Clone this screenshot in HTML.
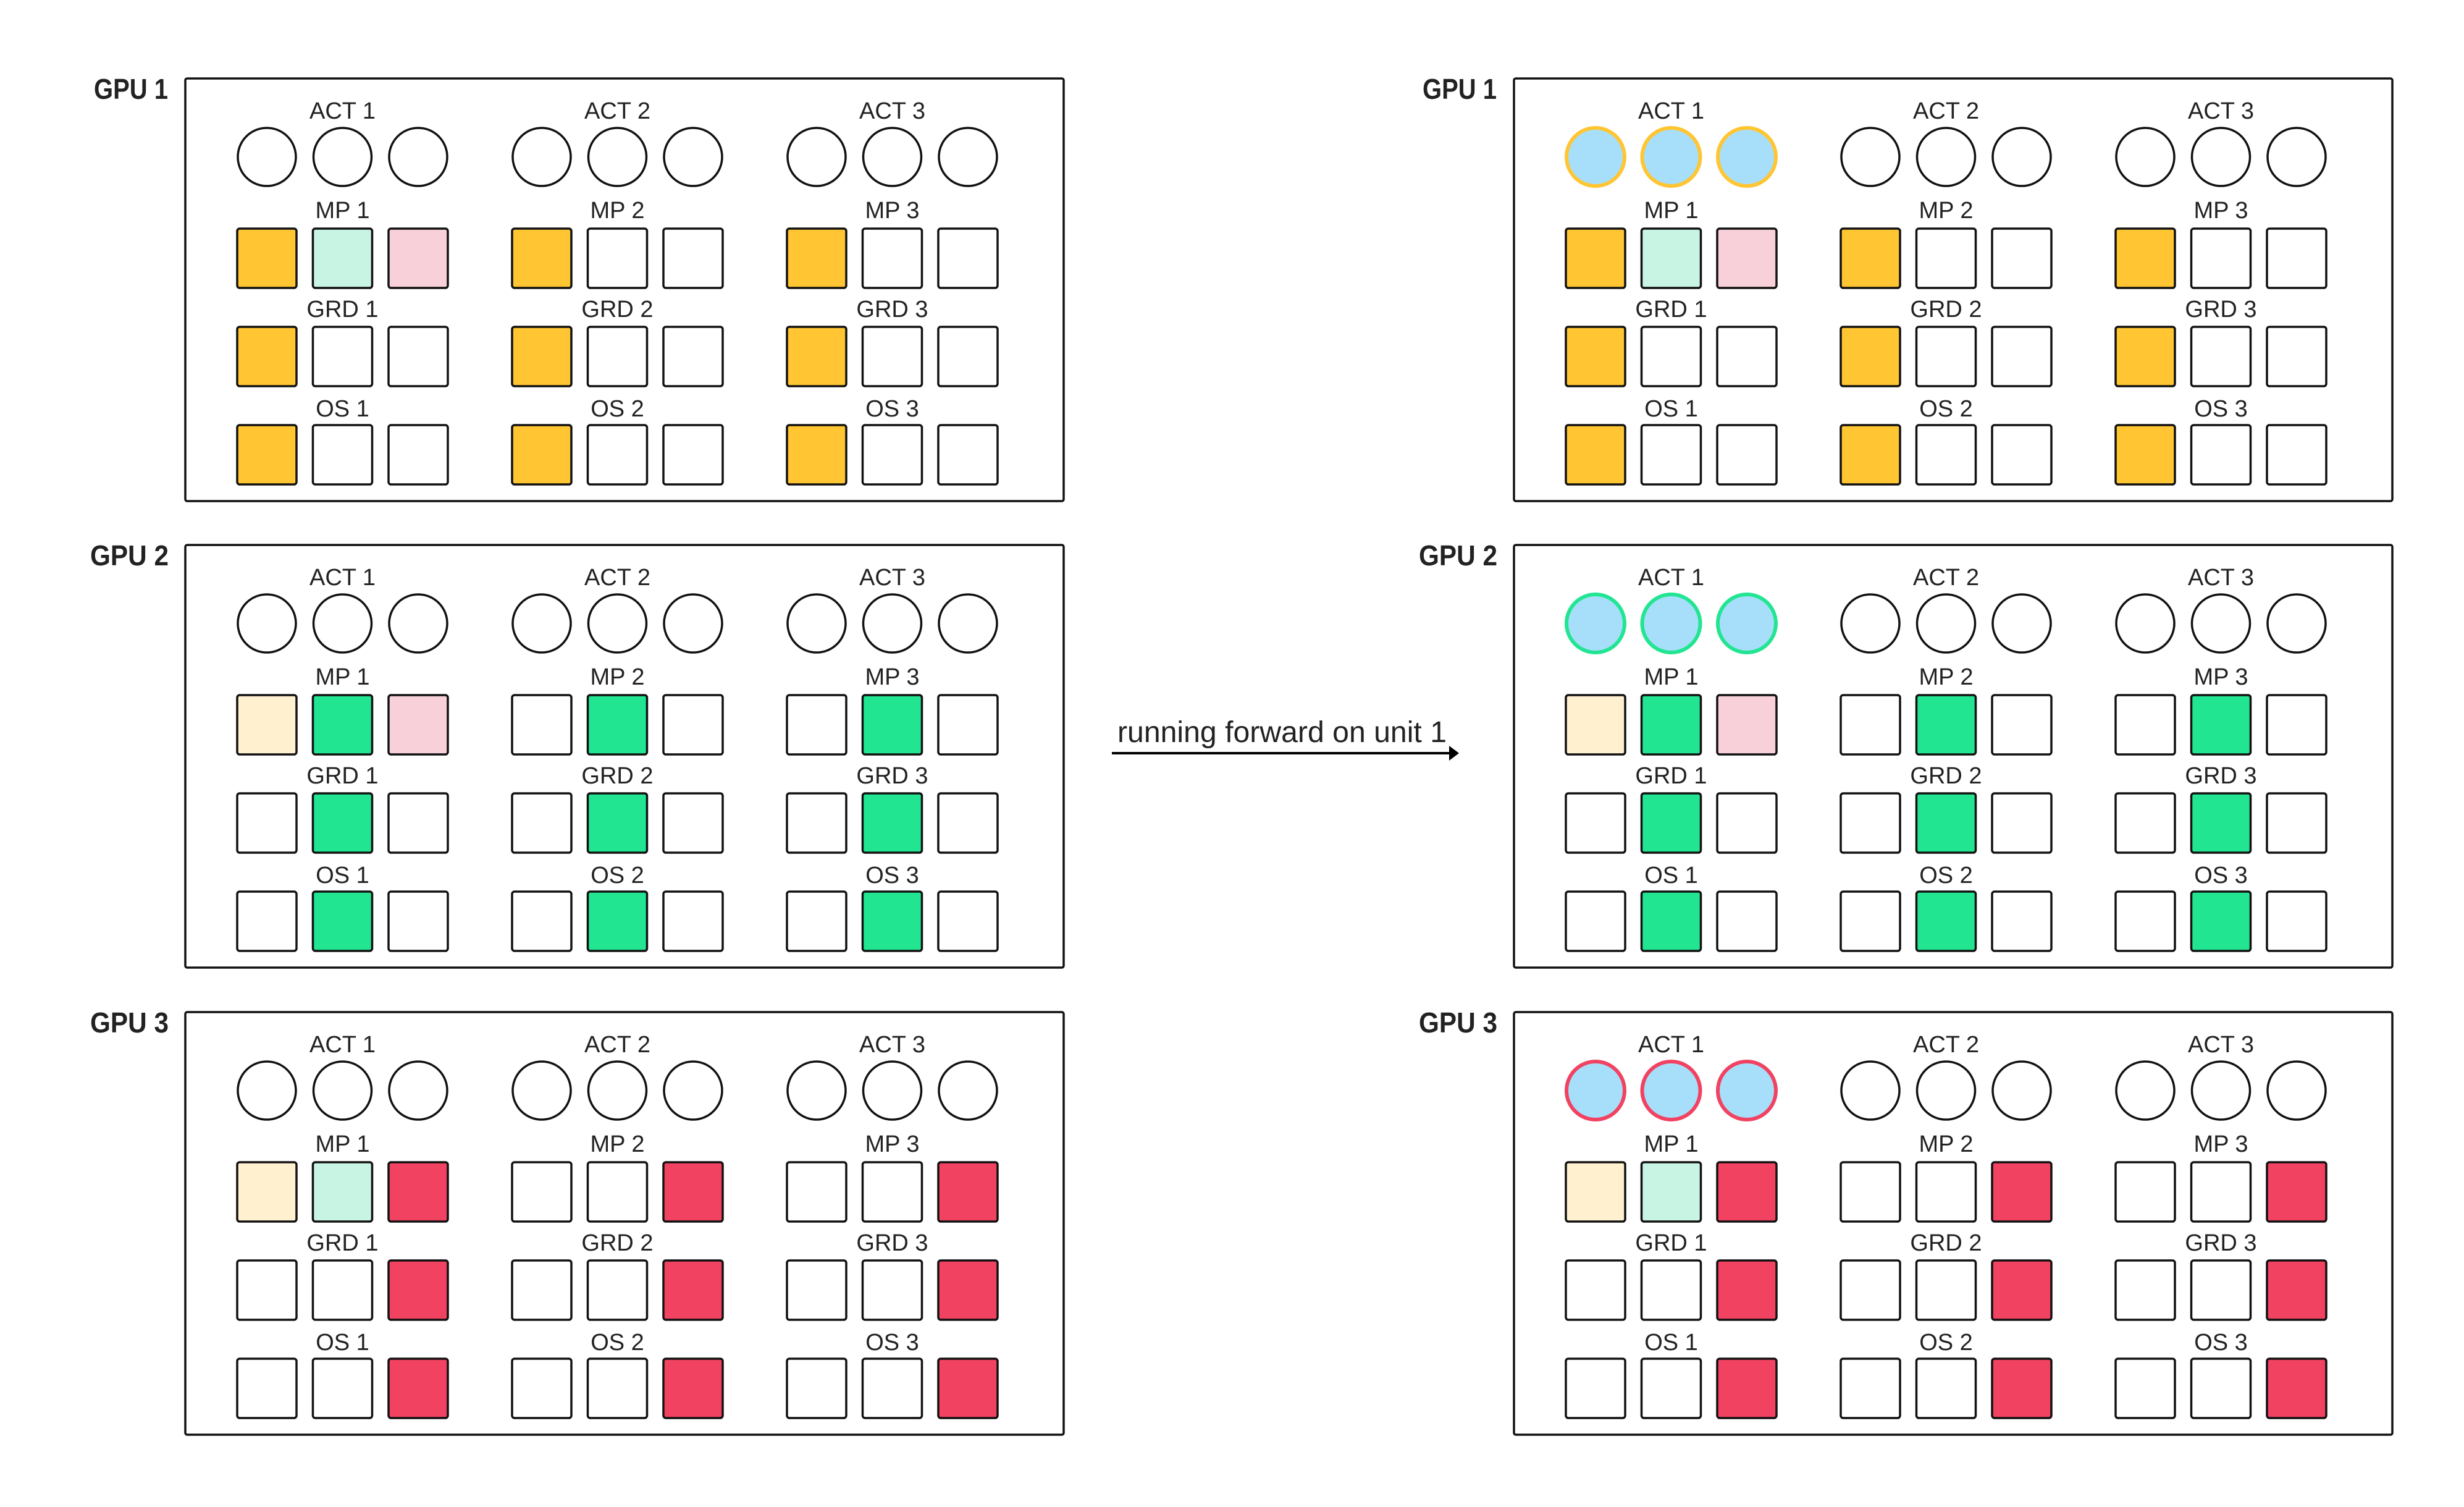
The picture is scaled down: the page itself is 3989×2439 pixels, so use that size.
<!DOCTYPE html>
<html><head><meta charset="utf-8"><style>
html,body{margin:0;padding:0;background:#fff;}
svg{display:block;}
.l{font-family:"Liberation Sans",sans-serif;font-size:38px;fill:#222;text-anchor:middle;}
.g{font-family:"Liberation Sans",sans-serif;font-size:46px;font-weight:bold;fill:#222;}
.k{stroke:#111;stroke-width:3.5;}
</style></head><body>
<svg width="3989" height="2439" viewBox="0 0 3989 2439" xmlns="http://www.w3.org/2000/svg">
<defs>
<g id="box">
<rect x="0" y="0" width="1422" height="684" rx="3" fill="#fff" stroke="#111" stroke-width="3.5"/>
<!-- circles group0 -->
<circle cx="132" cy="127" r="47" style="fill:var(--af);stroke:var(--as);stroke-width:var(--aw)"/>
<circle cx="254.5" cy="127" r="47" style="fill:var(--af);stroke:var(--as);stroke-width:var(--aw)"/>
<circle cx="377" cy="127" r="47" style="fill:var(--af);stroke:var(--as);stroke-width:var(--aw)"/>
<g fill="#fff" class="k">
<circle cx="577" cy="127" r="47"/><circle cx="699.5" cy="127" r="47"/><circle cx="822" cy="127" r="47"/>
<circle cx="1022" cy="127" r="47"/><circle cx="1144.5" cy="127" r="47"/><circle cx="1267" cy="127" r="47"/>
</g>
<g class="k">
<!-- MP row -->
<rect x="84" y="243" width="96" height="96" rx="4" style="fill:var(--p0)"/>
<rect x="206.5" y="243" width="96" height="96" rx="4" style="fill:var(--p1)"/>
<rect x="329" y="243" width="96" height="96" rx="4" style="fill:var(--p2)"/>
<rect x="529" y="243" width="96" height="96" rx="4" style="fill:var(--c0)"/>
<rect x="651.5" y="243" width="96" height="96" rx="4" style="fill:var(--c1)"/>
<rect x="774" y="243" width="96" height="96" rx="4" style="fill:var(--c2)"/>
<rect x="974" y="243" width="96" height="96" rx="4" style="fill:var(--c0)"/>
<rect x="1096.5" y="243" width="96" height="96" rx="4" style="fill:var(--c1)"/>
<rect x="1219" y="243" width="96" height="96" rx="4" style="fill:var(--c2)"/>
<!-- GRD row -->
<rect x="84" y="402" width="96" height="96" rx="4" style="fill:var(--c0)"/>
<rect x="206.5" y="402" width="96" height="96" rx="4" style="fill:var(--c1)"/>
<rect x="329" y="402" width="96" height="96" rx="4" style="fill:var(--c2)"/>
<rect x="529" y="402" width="96" height="96" rx="4" style="fill:var(--c0)"/>
<rect x="651.5" y="402" width="96" height="96" rx="4" style="fill:var(--c1)"/>
<rect x="774" y="402" width="96" height="96" rx="4" style="fill:var(--c2)"/>
<rect x="974" y="402" width="96" height="96" rx="4" style="fill:var(--c0)"/>
<rect x="1096.5" y="402" width="96" height="96" rx="4" style="fill:var(--c1)"/>
<rect x="1219" y="402" width="96" height="96" rx="4" style="fill:var(--c2)"/>
<!-- OS row -->
<rect x="84" y="561" width="96" height="96" rx="4" style="fill:var(--c0)"/>
<rect x="206.5" y="561" width="96" height="96" rx="4" style="fill:var(--c1)"/>
<rect x="329" y="561" width="96" height="96" rx="4" style="fill:var(--c2)"/>
<rect x="529" y="561" width="96" height="96" rx="4" style="fill:var(--c0)"/>
<rect x="651.5" y="561" width="96" height="96" rx="4" style="fill:var(--c1)"/>
<rect x="774" y="561" width="96" height="96" rx="4" style="fill:var(--c2)"/>
<rect x="974" y="561" width="96" height="96" rx="4" style="fill:var(--c0)"/>
<rect x="1096.5" y="561" width="96" height="96" rx="4" style="fill:var(--c1)"/>
<rect x="1219" y="561" width="96" height="96" rx="4" style="fill:var(--c2)"/>
</g>
</g>
</defs>

<!-- Left column -->
<use href="#box" x="300" y="127" style="--af:#fff;--as:#111;--aw:3.5;--c0:#FFC532;--c1:#fff;--c2:#fff;--p0:#FFC532;--p1:#C8F5E3;--p2:#F8D0D9"/>
<use href="#box" x="300" y="882" style="--af:#fff;--as:#111;--aw:3.5;--c0:#fff;--c1:#22E592;--c2:#fff;--p0:#FFF0CF;--p1:#22E592;--p2:#F8D0D9"/>
<use href="#box" x="300" y="1638" style="--af:#fff;--as:#111;--aw:3.5;--c0:#fff;--c1:#fff;--c2:#F24262;--p0:#FFF0CF;--p1:#C8F5E3;--p2:#F24262"/>
<!-- Right column -->
<use href="#box" x="2451" y="127" style="--af:#A7DFFB;--as:#FFC532;--aw:6;--c0:#FFC532;--c1:#fff;--c2:#fff;--p0:#FFC532;--p1:#C8F5E3;--p2:#F8D0D9"/>
<use href="#box" x="2451" y="882" style="--af:#A7DFFB;--as:#22E592;--aw:6;--c0:#fff;--c1:#22E592;--c2:#fff;--p0:#FFF0CF;--p1:#22E592;--p2:#F8D0D9"/>
<use href="#box" x="2451" y="1638" style="--af:#A7DFFB;--as:#F24262;--aw:6;--c0:#fff;--c1:#fff;--c2:#F24262;--p0:#FFF0CF;--p1:#C8F5E3;--p2:#F24262"/>

<!-- GPU labels -->
<text class="g" x="152" y="160" textLength="120" lengthAdjust="spacingAndGlyphs">GPU 1</text>
<text class="g" x="146" y="915" textLength="127" lengthAdjust="spacingAndGlyphs">GPU 2</text>
<text class="g" x="146" y="1671" textLength="127" lengthAdjust="spacingAndGlyphs">GPU 3</text>
<text class="g" x="2303" y="160" textLength="120" lengthAdjust="spacingAndGlyphs">GPU 1</text>
<text class="g" x="2297" y="915" textLength="127" lengthAdjust="spacingAndGlyphs">GPU 2</text>
<text class="g" x="2297" y="1671" textLength="127" lengthAdjust="spacingAndGlyphs">GPU 3</text>

<!-- Box labels: left -->
<g transform="translate(300,127)">
<text class="l" x="254.5" y="65">ACT 1</text><text class="l" x="699.5" y="65">ACT 2</text><text class="l" x="1144.5" y="65">ACT 3</text>
<text class="l" x="254.5" y="226">MP 1</text><text class="l" x="699.5" y="226">MP 2</text><text class="l" x="1144.5" y="226">MP 3</text>
<text class="l" x="254.5" y="386">GRD 1</text><text class="l" x="699.5" y="386">GRD 2</text><text class="l" x="1144.5" y="386">GRD 3</text>
<text class="l" x="254.5" y="547">OS 1</text><text class="l" x="699.5" y="547">OS 2</text><text class="l" x="1144.5" y="547">OS 3</text>
</g>
<g transform="translate(300,882)">
<text class="l" x="254.5" y="65">ACT 1</text><text class="l" x="699.5" y="65">ACT 2</text><text class="l" x="1144.5" y="65">ACT 3</text>
<text class="l" x="254.5" y="226">MP 1</text><text class="l" x="699.5" y="226">MP 2</text><text class="l" x="1144.5" y="226">MP 3</text>
<text class="l" x="254.5" y="386">GRD 1</text><text class="l" x="699.5" y="386">GRD 2</text><text class="l" x="1144.5" y="386">GRD 3</text>
<text class="l" x="254.5" y="547">OS 1</text><text class="l" x="699.5" y="547">OS 2</text><text class="l" x="1144.5" y="547">OS 3</text>
</g>
<g transform="translate(300,1638)">
<text class="l" x="254.5" y="65">ACT 1</text><text class="l" x="699.5" y="65">ACT 2</text><text class="l" x="1144.5" y="65">ACT 3</text>
<text class="l" x="254.5" y="226">MP 1</text><text class="l" x="699.5" y="226">MP 2</text><text class="l" x="1144.5" y="226">MP 3</text>
<text class="l" x="254.5" y="386">GRD 1</text><text class="l" x="699.5" y="386">GRD 2</text><text class="l" x="1144.5" y="386">GRD 3</text>
<text class="l" x="254.5" y="547">OS 1</text><text class="l" x="699.5" y="547">OS 2</text><text class="l" x="1144.5" y="547">OS 3</text>
</g>
<!-- Box labels: right -->
<g transform="translate(2451,127)">
<text class="l" x="254.5" y="65">ACT 1</text><text class="l" x="699.5" y="65">ACT 2</text><text class="l" x="1144.5" y="65">ACT 3</text>
<text class="l" x="254.5" y="226">MP 1</text><text class="l" x="699.5" y="226">MP 2</text><text class="l" x="1144.5" y="226">MP 3</text>
<text class="l" x="254.5" y="386">GRD 1</text><text class="l" x="699.5" y="386">GRD 2</text><text class="l" x="1144.5" y="386">GRD 3</text>
<text class="l" x="254.5" y="547">OS 1</text><text class="l" x="699.5" y="547">OS 2</text><text class="l" x="1144.5" y="547">OS 3</text>
</g>
<g transform="translate(2451,882)">
<text class="l" x="254.5" y="65">ACT 1</text><text class="l" x="699.5" y="65">ACT 2</text><text class="l" x="1144.5" y="65">ACT 3</text>
<text class="l" x="254.5" y="226">MP 1</text><text class="l" x="699.5" y="226">MP 2</text><text class="l" x="1144.5" y="226">MP 3</text>
<text class="l" x="254.5" y="386">GRD 1</text><text class="l" x="699.5" y="386">GRD 2</text><text class="l" x="1144.5" y="386">GRD 3</text>
<text class="l" x="254.5" y="547">OS 1</text><text class="l" x="699.5" y="547">OS 2</text><text class="l" x="1144.5" y="547">OS 3</text>
</g>
<g transform="translate(2451,1638)">
<text class="l" x="254.5" y="65">ACT 1</text><text class="l" x="699.5" y="65">ACT 2</text><text class="l" x="1144.5" y="65">ACT 3</text>
<text class="l" x="254.5" y="226">MP 1</text><text class="l" x="699.5" y="226">MP 2</text><text class="l" x="1144.5" y="226">MP 3</text>
<text class="l" x="254.5" y="386">GRD 1</text><text class="l" x="699.5" y="386">GRD 2</text><text class="l" x="1144.5" y="386">GRD 3</text>
<text class="l" x="254.5" y="547">OS 1</text><text class="l" x="699.5" y="547">OS 2</text><text class="l" x="1144.5" y="547">OS 3</text>
</g>

<!-- Arrow -->
<text x="1809" y="1201" font-family="Liberation Sans, sans-serif" font-size="48" fill="#222" textLength="533" lengthAdjust="spacingAndGlyphs">running forward on unit 1</text>
<line x1="1800" y1="1219" x2="2350" y2="1219" stroke="#000" stroke-width="4"/>
<polygon points="2346,1207 2362,1219 2346,1231" fill="#000"/>
</svg>
</body></html>
